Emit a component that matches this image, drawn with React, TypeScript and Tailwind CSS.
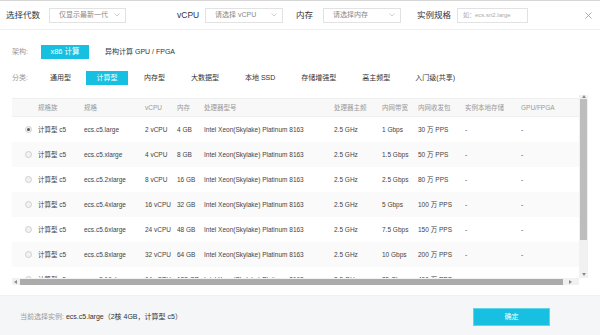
import React from 'react';

const FONT = '"Liberation Sans", "Noto Sans CJK SC", sans-serif';

interface SpecRow {
  spec: string;
  vcpu: string;
  mem: string;
  bw: string;
  pps: string;
}

const rows: SpecRow[] = [
  { spec: 'ecs.c5.large', vcpu: '2 vCPU', mem: '4 GB', bw: '1 Gbps', pps: '30 万 PPS' },
  { spec: 'ecs.c5.xlarge', vcpu: '4 vCPU', mem: '8 GB', bw: '1.5 Gbps', pps: '50 万 PPS' },
  { spec: 'ecs.c5.2xlarge', vcpu: '8 vCPU', mem: '16 GB', bw: '2.5 Gbps', pps: '80 万 PPS' },
  { spec: 'ecs.c5.4xlarge', vcpu: '16 vCPU', mem: '32 GB', bw: '5 Gbps', pps: '100 万 PPS' },
  { spec: 'ecs.c5.6xlarge', vcpu: '24 vCPU', mem: '48 GB', bw: '7.5 Gbps', pps: '150 万 PPS' },
  { spec: 'ecs.c5.8xlarge', vcpu: '32 vCPU', mem: '64 GB', bw: '10 Gbps', pps: '200 万 PPS' },
  { spec: 'ecs.c5.16xlarge', vcpu: '64 vCPU', mem: '128 GB', bw: '25 Gbps', pps: '400 万 PPS' },
];

const categories = ['通用型', '计算型', '内存型', '大数据型', '本地 SSD', '存储增强型', '高主频型', '入门级(共享)'];
// left margin of each category item, taken from the screenshot
const catMargins = ['ml-[20px]', 'ml-[15px]', 'ml-[16px]', 'ml-[26px]', 'ml-[26px]', 'ml-[26px]', 'ml-[26px]', 'ml-[25px]'];

const Chevron = () => (
  <svg width="6" height="4" viewBox="0 0 6 4" className="shrink-0">
    <path d="M0.5 0.5 L3 3 L5.5 0.5" fill="none" stroke="#c4c4c4" strokeWidth="0.8" />
  </svg>
);

const Select = ({ text, className = '' }: { text: string; className?: string }) => (
  <div
    className={`h-[15px] border border-[#e2e2e2] bg-white flex items-center justify-between pl-[9px] pr-[5px] text-[7px] text-[#888] whitespace-nowrap ${className}`}
  >
    <span>{text}</span>
    <Chevron />
  </div>
);

const Radio = ({ checked }: { checked?: boolean }) => (
  <div className="w-[7px] h-[7px] rounded-full border border-[#cfcfcf] bg-[#f2f2f2] flex items-center justify-center">
    {checked && <div className="w-[3px] h-[3px] rounded-full bg-[#555]" />}
  </div>
);

const Tri = ({ dir }: { dir: 'up' | 'down' | 'left' | 'right' }) => {
  const d = {
    up: 'M0 3 L2 0 L4 3 Z',
    down: 'M0 0 L4 0 L2 3 Z',
    left: 'M3 0 L3 4 L0 2 Z',
    right: 'M0 0 L0 4 L3 2 Z',
  }[dir];
  return (
    <svg width="4" height="4" viewBox="0 0 4 4">
      <path d={d} fill="#8a8a8a" />
    </svg>
  );
};

const cols = ['w-[46px]', 'w-[61px]', 'w-[32px]', 'w-[27px]', 'w-[130px]', 'w-[48px]', 'w-[36px]', 'w-[47px]', 'w-[56px]', 'w-[58px]'];
const headers = ['规格族', '规格', 'vCPU', '内存', '处理器型号', '处理器主频', '内网带宽', '内网收发包', '实例本地存储', 'GPU/FPGA'];

export default function App() {
  return (
    <div className="w-[600px] h-[335px] bg-white flex flex-col overflow-hidden border-t border-[#d6d6d6]" style={{ fontFamily: FONT }}>
      {/* filter bar */}
      <div className="h-[29px] shrink-0 border-b border-[#efefef] flex items-center pl-[6px] pr-[8px]">
        <span className="w-[34px] text-[8.5px] text-[#333] whitespace-nowrap">选择代数</span>
        <Select text="仅显示最新一代" className="ml-[9px] w-[77px]" />
        <span className="ml-[51px] w-[20px] text-[8.5px] text-[#333]">vCPU</span>
        <Select text="请选择 vCPU" className="ml-[8px] w-[78px]" />
        <span className="ml-[13px] w-[18px] text-[8.5px] text-[#333] whitespace-nowrap">内存</span>
        <Select text="请选择内存" className="ml-[9px] w-[78px]" />
        <span className="ml-[16px] w-[34px] text-[8.5px] text-[#333] whitespace-nowrap">实例规格</span>
        <div className="ml-[6px] w-[71px] h-[15px] border border-[#e2e2e2] flex items-center pl-[5px] text-[6px] text-[#aaa] whitespace-nowrap">
          如：ecs.sn2.large
        </div>
        <svg width="7" height="7" viewBox="0 0 7 7" className="ml-auto">
          <path d="M0.5 0.5 L6.5 6.5 M6.5 0.5 L0.5 6.5" stroke="#9a9a9a" strokeWidth="0.8" />
        </svg>
      </div>

      {/* architecture */}
      <div className="mt-[15px] h-[14px] flex items-center pl-[12px]">
        <span className="w-[29px] text-[7px] text-[#999]">架构:</span>
        <div className="h-[14px] w-[48px] bg-[#17bfe0] text-white text-[7.5px] flex items-center justify-center whitespace-nowrap">
          x86 计算
        </div>
        <span className="ml-[16px] text-[7px] text-[#333] whitespace-nowrap">异构计算 GPU / FPGA</span>
      </div>

      {/* category */}
      <div className="mt-[12px] h-[14px] flex items-center pl-[12px]">
        <span className="w-[18px] text-[7px] text-[#999]">分类:</span>
        {categories.map((c, i) =>
          c === '计算型' ? (
            <div key={c} className={`${catMargins[i]} h-[14px] w-[42px] bg-[#17bfe0] text-white text-[7px] flex items-center justify-center`}>
              {c}
            </div>
          ) : (
            <span key={c} className={`${catMargins[i]} text-[7px] text-[#333] whitespace-nowrap`}>
              {c}
            </span>
          )
        )}
      </div>

      {/* table with scrollbars */}
      <div className="mt-[10px] ml-[12px] w-[576px] h-[190px] flex flex-col">
        <div className="flex h-[183px]">
          <div className="w-[567px] h-[183px] overflow-hidden pt-[3px]">
            <div className="h-[19px] flex items-center bg-[#f8f8f8] border-y border-[#efefef] text-[6.5px] text-[#999]">
              <div className="w-[26px]" />
              {headers.map((h, i) => (
                <div key={h} className={`${cols[i]} whitespace-nowrap`}>{h}</div>
              ))}
            </div>
            {rows.map((r, idx) => {
              const cells = ['计算型 c5', r.spec, r.vcpu, r.mem, 'Intel Xeon(Skylake) Platinum 8163', '2.5 GHz', r.bw, r.pps, '-', '-'];
              return (
                <div
                  key={r.spec}
                  className={`h-[25px] flex items-center text-[6.5px] text-[#444] ${idx % 2 === 1 ? 'bg-[#fafafa]' : 'bg-white'}`}
                >
                  <div className="w-[26px] pl-[13px]">
                    <Radio checked={idx === 0} />
                  </div>
                  {cells.map((c, i) => (
                    <div key={i} className={`${cols[i]} whitespace-nowrap`}>{c}</div>
                  ))}
                </div>
              );
            })}
          </div>
          {/* vertical scrollbar */}
          <div className="w-[9px] h-[183px] bg-[#f1f1f1] flex flex-col items-center">
            <div className="h-[4px] flex items-center"><Tri dir="up" /></div>
            <div className="w-[7px] h-[141px] bg-[#bdbdbd]" />
            <div className="flex-1" />
            <div className="h-[6px] flex items-center"><Tri dir="down" /></div>
          </div>
        </div>
        {/* horizontal scrollbar */}
        <div className="flex h-[7px]">
          <div className="w-[567px] h-[7px] bg-[#f1f1f1] flex items-center">
            <div className="w-[8px] flex justify-center"><Tri dir="left" /></div>
            <div className="w-[543px] h-[6px] bg-[#ababab]" />
            <div className="flex-1 flex justify-center"><Tri dir="right" /></div>
          </div>
          <div className="w-[9px] bg-white" />
        </div>
      </div>

      {/* footer */}
      <div className="mt-auto h-[40px] shrink-0 bg-[#f5f6f8] border-t border-[#eef0f3] flex items-center pl-[20px] pr-[50px] pt-[3px]">
        <span className="text-[7px] text-[#999] whitespace-nowrap">当前选择实例:</span>
        <span className="ml-[2px] text-[7px] text-[#333] whitespace-nowrap">ecs.c5.large（2核 4GB，计算型 c5）</span>
        <div className="ml-auto w-[77px] h-[18px] bg-[#17bfe0] border border-[#5fd5ec] text-white text-[7px] flex items-center justify-center">
          确定
        </div>
      </div>
    </div>
  );
}
